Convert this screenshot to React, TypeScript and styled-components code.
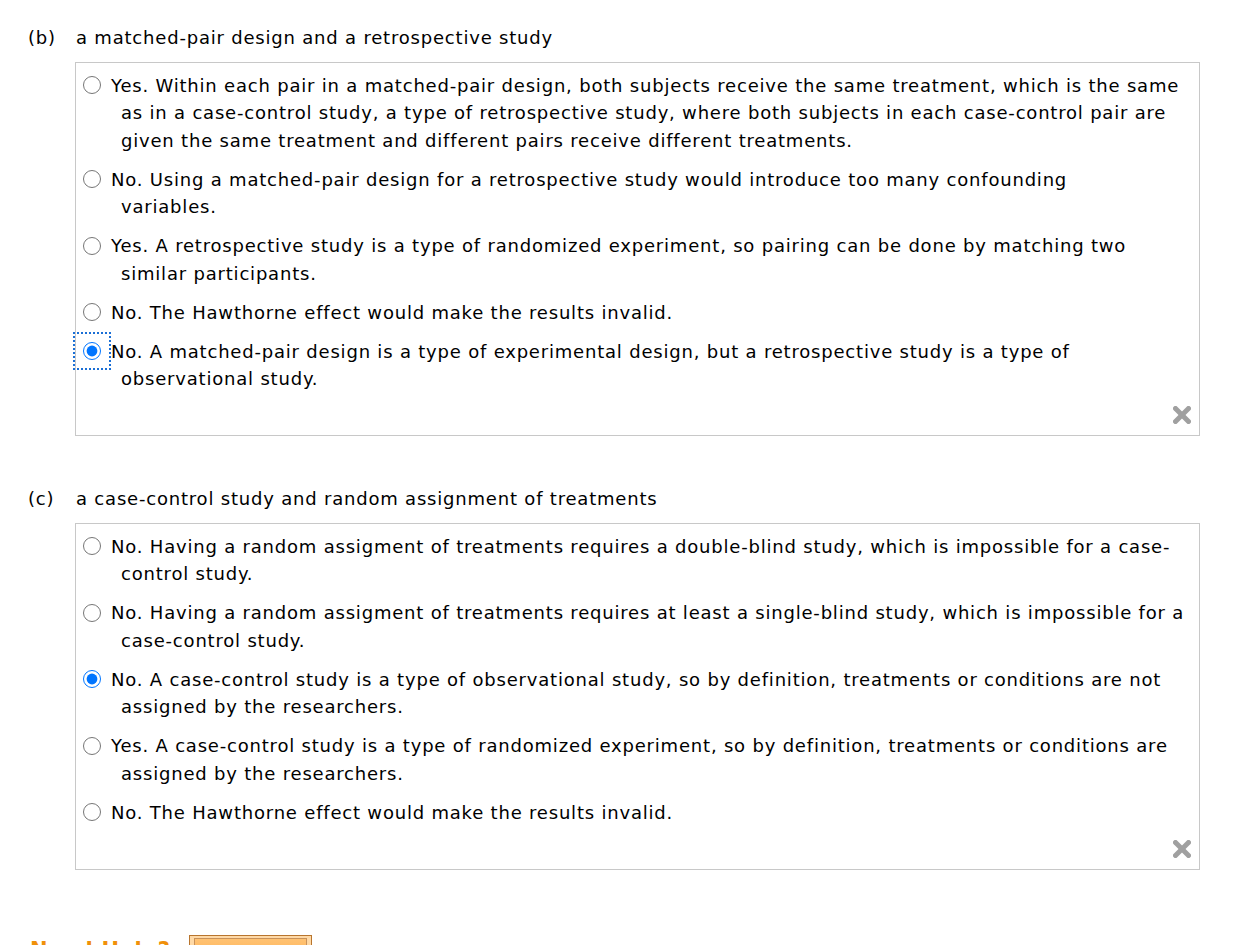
import React from 'react';
import styled, {createGlobalStyle} from "styled-components";

const GlobalStyle = createGlobalStyle`
  body {
    margin: 0;
    background: #fff;
    font-family: "DejaVu Sans", Verdana, sans-serif;
    color: #000;
  }
`

type Choice = { text: string; checked?: boolean; focused?: boolean };

const partB: Choice[] = [
    {text: 'Yes. Within each pair in a matched-pair design, both subjects receive the same treatment, which is the same as in a case-control study, a type of retrospective study, where both subjects in each case-control pair are given the same treatment and different pairs receive different treatments.'},
    {text: 'No. Using a matched-pair design for a retrospective study would introduce too many confounding\nvariables.'},
    {text: 'Yes. A retrospective study is a type of randomized experiment, so pairing can be done by matching two similar participants.'},
    {text: 'No. The Hawthorne effect would make the results invalid.'},
    {text: 'No. A matched-pair design is a type of experimental design, but a retrospective study is a type of observational study.', checked: true, focused: true},
];

const partC: Choice[] = [
    {text: 'No. Having a random assigment of treatments requires a double-blind study, which is impossible for a case-control study.'},
    {text: 'No. Having a random assigment of treatments requires at least a single-blind study, which is impossible for a case-control study.'},
    {text: 'No. A case-control study is a type of observational study, so by definition, treatments or conditions are not assigned by the researchers.', checked: true},
    {text: 'Yes. A case-control study is a type of randomized experiment, so by definition, treatments or conditions are assigned by the researchers.'},
    {text: 'No. The Hawthorne effect would make the results invalid.'},
];

const ClearIcon = () => (
    <svg width="22" height="22" viewBox="0 0 22 22">
        <g stroke="#9b9b9b" strokeWidth="5" strokeLinecap="round" opacity="0.95">
            <line x1="4.5" y1="4.5" x2="17.5" y2="17.5"/>
            <line x1="17.5" y1="4.5" x2="4.5" y2="17.5"/>
        </g>
    </svg>
);

const Question = ({label, title, name, choices}: { label: string; title: string; name: string; choices: Choice[] }) => (
    <Part>
        <Heading>
            <PartLabel>{label}</PartLabel>
            <span>{title}</span>
        </Heading>
        <AnswerBox>
            {choices.map((c, i) => (
                <Option key={i}>
                    <RadioWrap focused={c.focused}>
                        <Radio type="radio" name={name} defaultChecked={c.checked}/>
                    </RadioWrap>
                    <OptionText>{c.text}</OptionText>
                </Option>
            ))}
            <ClearRow>
                <ClearIcon/>
            </ClearRow>
        </AnswerBox>
    </Part>
);

const App = () => {
    return (
        <Page>
            <GlobalStyle/>
            <Question label="(b)" title="a matched-pair design and a retrospective study" name="b" choices={partB}/>
            <Question label="(c)" title="a case-control study and random assignment of treatments" name="c" choices={partC}/>
            <HelpRow>
                <HelpText>Need Help?</HelpText>
                <HelpButton><HelpButtonInner/></HelpButton>
            </HelpRow>
        </Page>
    );
};

const Page = styled.div`
  padding: 24px 44px 0 28px;
  height: 945px;
  box-sizing: border-box;
  overflow: hidden;
  font-size: 18px;
  line-height: 27.5px;
  letter-spacing: 0.8px;
`

const Part = styled.section`
  margin-bottom: 49px;
`

const Heading = styled.div`
  display: flex;
  margin-bottom: 10px;
`

const PartLabel = styled.span`
  width: 48px;
  flex: none;
`

const AnswerBox = styled.div`
  margin-left: 47px;
  border: 1px solid #c8c8c8;
  padding: 9px 10px 9px 7px;
`

const Option = styled.label`
  display: flex;
  align-items: flex-start;
  margin-bottom: 11.5px;
`

const RadioWrap = styled.span<{ focused?: boolean }>`
  flex: none;
  width: 28px;
  height: 27.5px;
  display: flex;
  align-items: center;
  position: relative;
  &::before {
    content: '';
    display: ${p => p.focused ? 'block' : 'none'};
    position: absolute;
    left: -10px;
    top: -6px;
    width: 38px;
    height: 38px;
    box-sizing: border-box;
    border: 2px dotted #1a6fd6;
  }
`

const Radio = styled.input`
  width: 18px;
  height: 18px;
  margin: 0;
  accent-color: #0075ff;
`

const OptionText = styled.span`
  padding-left: 10px;
  text-indent: -10px;
  white-space: pre-line;
`

const ClearRow = styled.div`
  display: flex;
  justify-content: flex-end;
  margin-top: 5px;
  margin-right: -4px;
`

const HelpRow = styled.div`
  display: flex;
  align-items: flex-start;
  margin-top: 17px;
  gap: 18px;
`

const HelpText = styled.span`
  color: #f0900a;
  font-weight: bold;
  font-size: 21px;
  letter-spacing: 0.6px;
  padding-top: 2px;
  margin-top: 16px;
  margin-left: 2px;
`

const HelpButton = styled.div`
  width: 123px;
  height: 30px;
  margin-top: 16px;
  border: 1px solid #b8752e;
  background: #ffd9a6;
  box-sizing: border-box;
  padding: 2px 4px;
`

const HelpButtonInner = styled.div`
  height: 100%;
  border: 1px solid #c9925a;
  background: linear-gradient(#ffc273, #ffb04f);
`

export default App;
